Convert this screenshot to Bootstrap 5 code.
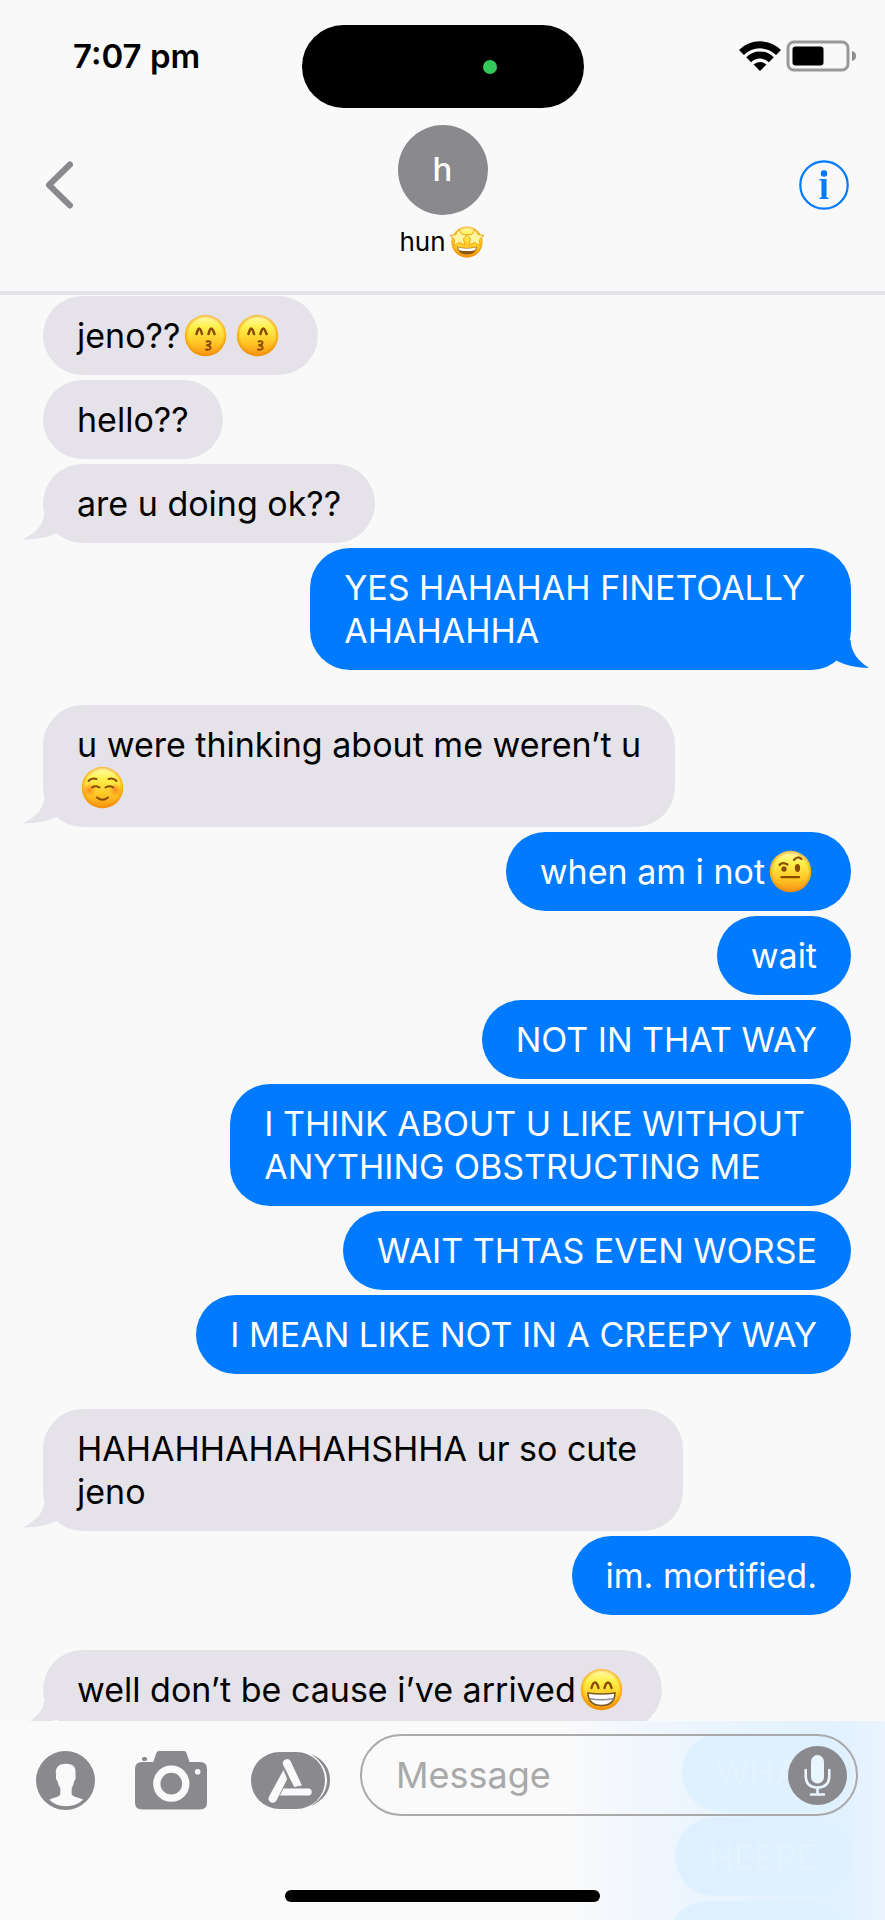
<!DOCTYPE html>
<html lang="en">
<head>
<meta charset="utf-8">
<meta name="viewport" content="width=device-width, initial-scale=1">
<title>hun – Messages</title>
<link href="https://cdn.jsdelivr.net/npm/bootstrap@5.3.0/dist/css/bootstrap.min.css" rel="stylesheet">
<style>
  :root { --grey: #8a898e; --in: #e5e3e9; --out: #007aff; --page: #f9f9f9; }
  body { background: var(--page); color: #000; font-family: Inter, "Liberation Sans", sans-serif; }
  svg { display: block; }
  .phone { height: 100vh; }
  .thirds { display: grid; grid-template-columns: 1fr auto 1fr; }

  /* top of the screen */
  .status { padding: 25px 28px 0 73px; }
  .status-side { height: 62px; }
  .clock { font-size: 33px; font-weight: 600; line-height: 40px; }
  .island { width: 282px; height: 83px; background: #000; padding-right: 87px; margin-left: -45px; }
  .cam-dot { width: 14px; height: 14px; background: #34c759; }
  .topbar { padding: 17px 36px 33px 45px; border-bottom: 4px solid #e5e4e9; }
  .topbar-side { height: 120px; }
  .contact { margin-left: -9px; }
  .avatar { width: 90px; height: 90px; background: var(--grey); color: #fff; font-size: 33px; font-weight: 500; }
  .contact-name { margin-top: 11px; font-size: 26px; line-height: 32px; font-weight: 400; }

  /* conversation */
  .thread { flex: 1 1 0; min-height: 0; padding: 1px 34px 0 43px; }
  .run { gap: 5px; }
  .run + .run { margin-top: 5px; }
  .run.spaced { margin-top: 35px; }
  .bubble { position: relative; padding: 18px 34px; border-radius: 40px; font-size: 34px; line-height: 43px; white-space: nowrap; }
  .bubble-wrapped { padding-right: 46px; }
  .bubble-in { background: var(--in); }
  .bubble-out { background: var(--out); color: #fff; }
  .emoji { display: inline-block; width: 52px; height: 43px; vertical-align: top; }
  .tail { position: absolute; bottom: 0; width: 40px; height: 36px; }
  .bubble-in .tail { left: -20px; fill: var(--in); }
  .bubble-out .tail { right: -18px; fill: var(--out); }

  /* composer */
  .composer { position: relative; padding: 13px 0 18px;
    background: linear-gradient(90deg, #fafafb 64%, #f0f6fe 73%, #e6f3ff 86%, #e2f1ff 95%, #eaf4ff 100%); }
  .under { position: absolute; inset: 0; overflow: hidden; padding: 12px 34px 0 0; }
  .under .bubble { background: #dff0ff; color: #e5f3ff; }
  .tools { position: relative; padding: 0 27px 0 36px; }
  .tool-icons { padding-top: 17px; padding-right: 29px; gap: 40px; }
  .field { height: 82px; min-width: 0; border: 2px solid #aaa; padding: 0 9px 0 34px; }
  .field input { width: 0; font-size: 36px; line-height: 44px; color: #000; outline: 0; }
  .field input::placeholder { color: #a9a9a9; opacity: 1; }
  .home-bar { position: relative; width: 36%; max-width: 315px; height: 12px; background: #000; margin-top: 74px; }
</style>
</head>
<body>
<svg width="0" height="0" class="position-absolute" aria-hidden="true">
  <defs>
    <linearGradient id="face" x1="0" y1="0" x2="0" y2="1">
      <stop offset="0" stop-color="#fffbb4"/><stop offset=".3" stop-color="#fff04a"/>
      <stop offset=".65" stop-color="#ffc928"/><stop offset="1" stop-color="#f79310"/>
    </linearGradient>
    <radialGradient id="rim"><stop offset=".82" stop-color="#f08a00" stop-opacity="0"/><stop offset="1" stop-color="#f08a00" stop-opacity=".65"/></radialGradient>
    <radialGradient id="blush"><stop offset="0" stop-color="#ff6a1a" stop-opacity=".75"/><stop offset="1" stop-color="#ff8a1a" stop-opacity="0"/></radialGradient>
    <g id="head"><circle cx="25.500" cy="21.500" r="20.700" fill="url(#face)"/><circle cx="25.500" cy="21.500" r="20.700" fill="url(#rim)"/></g>
    <symbol id="kiss" viewBox="0 0 52 43">
      <use href="#head"/>
      <g fill="none" stroke="#8a4b00" stroke-width="2.6" stroke-linecap="round" stroke-linejoin="round">
        <path d="M16.500 20Q18 14.500 19.200 14.500Q20.500 14.500 22 20M28.500 20Q30 14.500 31.300 14.500Q32.500 14.500 34.500 20"/>
        <path d="M26.500 27.500Q31 26.500 30.500 29Q30 31 27 31.300Q31.500 32 30.500 34.500Q29 36.500 26 35.500" stroke-width="1.900"/>
      </g>
    </symbol>
    <symbol id="smile" viewBox="0 0 52 43">
      <use href="#head"/>
      <circle cx="12.500" cy="24" r="7" fill="url(#blush)"/><circle cx="38.500" cy="24" r="7" fill="url(#blush)"/>
      <g fill="none" stroke="#8a4b00" stroke-width="2" stroke-linecap="round">
        <path d="M11.500 15Q14.500 11.500 19.500 13M31.500 13Q36.500 11.500 39.500 15M15 21.500Q18.500 19 22.500 21.500M28.500 21.500Q32.500 19 36.500 21.500M20 31.500Q25.500 36 31 31.500"/>
      </g>
    </symbol>
    <symbol id="brow" viewBox="0 0 52 43">
      <use href="#head"/>
      <g fill="none" stroke="#8a4b00" stroke-width="2.200" stroke-linecap="round">
        <path d="M14.500 15Q17.500 11.500 22.500 14.500M29 10Q32.500 5.500 36.500 9M16.500 27.200H34"/>
      </g>
      <ellipse cx="19" cy="19" rx="2.600" ry="2.800" fill="#8a4b00"/><ellipse cx="32.500" cy="18" rx="2.600" ry="4" fill="#8a4b00"/>
    </symbol>
    <symbol id="grin" viewBox="0 0 52 43">
      <use href="#head"/>
      <path d="M15.500 20Q17 14.500 19 14.500Q21 14.500 22.500 20M28.500 20Q30 14.500 32 14.500Q34 14.500 35.500 20" fill="none" stroke="#8a4b00" stroke-width="2.400" stroke-linecap="round"/>
      <path d="M12 25Q25.500 27 39 25Q38.500 37.500 25.500 37.500Q12.500 37.500 12 25Z" fill="#fff" stroke="#7a5a20" stroke-width="1.600"/>
      <path d="M13 30.500Q25.500 33 38 30.500" fill="none" stroke="#8b8b8b" stroke-width="1.300"/>
    </symbol>
  </defs>
</svg>

<div class="phone d-flex flex-column overflow-hidden">
  <header>
    <div class="status thirds">
      <div class="status-side d-flex align-items-center"><time class="clock">7:07 pm</time></div>
      <div class="island rounded-pill d-flex align-items-center justify-content-end"><span class="cam-dot rounded-circle"></span></div>
      <div class="status-side d-flex align-items-center justify-content-end">
        <svg width="42" height="30" viewBox="0 0 42 30" role="img" aria-label="Wi-Fi">
          <path d="M2.500 11.500A26.200 26.200 0 0 1 39.500 11.500M9.700 18.700A16 16 0 0 1 32.300 18.700" fill="none" stroke="#000" stroke-width="7"/>
          <path d="M14.600 23.600A9 9 0 0 1 27.400 23.600L21 30Z"/>
        </svg>
        <svg class="ms-1" width="72" height="32" viewBox="0 0 72 32" role="img" aria-label="Battery">
          <rect x="3" y="2" width="60" height="28" rx="6" fill="none" stroke="#999" stroke-width="3"/>
          <rect x="7.500" y="6.500" width="31" height="19" rx="3"/>
          <path d="M67 11Q71 12 71 16Q71 20 67 21Z" fill="#8f8f8f"/>
        </svg>
      </div>
    </div>
    <nav class="topbar thirds">
      <div class="topbar-side d-flex align-items-center">
        <button class="btn p-0 border-0" aria-label="Back">
          <svg width="28" height="48" viewBox="0 0 28 48"><path d="M25 3.500L4 24L25 44.500" fill="none" stroke="#8a898e" stroke-width="6" stroke-linecap="round" stroke-linejoin="round"/></svg>
        </button>
      </div>
      <div class="contact d-flex flex-column align-items-center">
        <div class="avatar rounded-circle d-flex align-items-center justify-content-center">h</div>
        <h1 class="contact-name mb-0 d-flex align-items-center">hun
          <svg width="40" height="32" viewBox="-3 0 40 32" role="img" aria-label="star-struck">
            <circle cx="18" cy="16" r="15.500" fill="url(#face)"/><circle cx="18" cy="16" r="15.500" fill="url(#rim)"/>
            <path d="M10 3L12.500 8L18 9L14.500 13L16 19L10.500 16.500L5 19.500L5.500 13.500L1 9.500L7 8.500Z M26 3L29 8.500L35 9.500L30.500 13.500L31 19.500L25.500 16.500L20 19L21.500 13L18 9L23.500 8Z" fill="#fff5a0" stroke="#f0a415" stroke-width="1"/>
            <path d="M8 20.500Q18 23.500 28 20.500Q27 28.500 18 28.500Q9 28.500 8 20.500Z" fill="#8a5a10"/>
            <path d="M9 21.200Q18 24 27 21.200L26 24.200Q18 26 10 24.200Z" fill="#fff"/>
          </svg>
        </h1>
      </div>
      <div class="topbar-side d-flex align-items-center justify-content-end">
        <button class="btn p-0 border-0" aria-label="Details">
          <svg width="50" height="50" viewBox="0 0 50 50" fill="#007aff"><circle cx="25" cy="25" r="23.700" fill="none" stroke="#007aff" stroke-width="2.200"/><circle cx="25" cy="13.500" r="3.200"/><path d="M20.500 19H27.500V37.500H29.500V39H20.500V37.500H22.500V20.500H20.500Z"/></svg>
        </button>
      </div>
    </nav>
  </header>

  <main class="thread overflow-hidden">
    <div class="run d-flex flex-column align-items-start">
      <div class="bubble bubble-in">jeno??<svg class="emoji" role="img" aria-label="kissing face"><use href="#kiss"/></svg><svg class="emoji" role="img" aria-label="kissing face"><use href="#kiss"/></svg></div>
      <div class="bubble bubble-in">hello??</div>
      <div class="bubble bubble-in">are u doing ok??<svg class="tail" viewBox="0 0 40 36"><path d="M21 8C20 20 10 27 0 32.500Q18 33 34 26L40 8Z"/></svg></div>
    </div>
    <div class="run d-flex flex-column align-items-end">
      <div class="bubble bubble-out bubble-wrapped">YES HAHAHAH FINETOALLY<br>AHAHAHHA<svg class="tail" viewBox="0 0 40 36"><path d="M21.500 6C22 18 29 27 40 34Q22 34 8 27L10 6Z"/></svg></div>
    </div>
    <div class="run spaced d-flex flex-column align-items-start">
      <div class="bubble bubble-in">u were thinking about me weren’t u<br><svg class="emoji" role="img" aria-label="smiling face"><use href="#smile"/></svg><svg class="tail" viewBox="0 0 40 36"><path d="M21 8C20 20 10 27 0 32.500Q18 33 34 26L40 8Z"/></svg></div>
    </div>
    <div class="run d-flex flex-column align-items-end">
      <div class="bubble bubble-out">when am i not<svg class="emoji" role="img" aria-label="face with raised eyebrow"><use href="#brow"/></svg></div>
      <div class="bubble bubble-out">wait</div>
      <div class="bubble bubble-out">NOT IN THAT WAY</div>
      <div class="bubble bubble-out bubble-wrapped">I THINK ABOUT U LIKE WITHOUT<br>ANYTHING OBSTRUCTING ME</div>
      <div class="bubble bubble-out">WAIT THTAS EVEN WORSE</div>
      <div class="bubble bubble-out">I MEAN LIKE NOT IN A CREEPY WAY</div>
    </div>
    <div class="run spaced d-flex flex-column align-items-start">
      <div class="bubble bubble-in bubble-wrapped">HAHAHHAHAHAHSHHA ur so cute<br>jeno<svg class="tail" viewBox="0 0 40 36"><path d="M21 8C20 20 10 27 0 32.500Q18 33 34 26L40 8Z"/></svg></div>
    </div>
    <div class="run d-flex flex-column align-items-end">
      <div class="bubble bubble-out">im. mortified.</div>
    </div>
    <div class="run spaced d-flex flex-column align-items-start">
      <div class="bubble bubble-in">well don’t be cause i’ve arrived<svg class="emoji" role="img" aria-label="beaming face"><use href="#grin"/></svg><svg class="tail" viewBox="0 0 40 36"><path d="M21 8C20 20 10 27 0 32.500Q18 33 34 26L40 8Z"/></svg></div>
    </div>
  </main>

  <footer class="composer">
    <!-- next messages showing faintly through the bar -->
    <div class="under" aria-hidden="true">
      <div class="run d-flex flex-column align-items-end">
        <div class="bubble">WHAT</div>
        <div class="bubble">HEERE</div>
        <div class="bubble">&nbsp;&nbsp;&nbsp;&nbsp;&nbsp;&nbsp;&nbsp;&nbsp;&nbsp;&nbsp;&nbsp;&nbsp;</div>
      </div>
    </div>
    <form class="tools d-flex align-items-start">
      <div class="tool-icons d-flex flex-shrink-0">
        <button type="button" class="btn p-0 border-0" aria-label="Contact">
          <svg width="59" height="59" viewBox="0 0 59 59"><circle cx="29.500" cy="29.500" r="29.500" fill="#8a898e"/>
          <path d="M30 12.700C37 12.700 40 16 39.500 22Q39.300 25 39.800 26.500Q39.500 29 38.300 30Q37.500 34 35.700 37V43.500C37 46 43 46.500 47.300 48.800Q40 55.300 30 55.300Q20 55.300 13.300 48.800C18 46.500 23 46 24.300 43.500V37Q22 34 21.500 30Q20 29 19.800 26.500Q20.300 25 19.800 22C19.500 16 23 12.700 30 12.700Z" fill="#fafafb"/></svg>
        </button>
        <button type="button" class="btn p-0 border-0" aria-label="Camera">
          <svg width="72" height="59" viewBox="0 0 72 59" fill="#8a898e"><path d="M7 11H18.300L21.300 2Q22 0 24 0H49Q51 0 51.500 2L54.500 11H65Q72 11 72 18V51.500Q72 58.500 65 58.500H7Q0 58.500 0 51.500V18Q0 11 7 11Z"/><rect x="7" y="6" width="5" height="4" rx="1.800"/>
          <circle cx="36.300" cy="32.700" r="14.500" fill="none" stroke="#fafafb" stroke-width="7.300"/><circle cx="62.700" cy="20.700" r="2.800" fill="#fafafb"/></svg>
        </button>
        <button type="button" class="btn p-0 border-0 ms-1" aria-label="Apps">
          <svg width="80" height="59" viewBox="0 0 80 59" fill="#8a898e"><path d="M60 3Q79 11 79 29.500Q79 46 60 55Q76 44 76 29.500Q76 14 60 3Z"/><rect x="0" y="1" width="74" height="57" rx="28.500"/>
          <g fill="#fafafb"><path d="M39.500 10L51 34.500Q46 35 43.200 36L32 13.500A4.200 4.200 0 0 1 39.500 10Z"/><path d="M32.500 19L36.200 28L25.500 49.500A4.200 4.200 0 0 1 18 45.500Z"/><path d="M32.500 37.500H58A3.600 3.600 0 0 1 58 44.500H29Z"/></g></svg>
        </button>
      </div>
      <div class="field rounded-pill d-flex align-items-center flex-grow-1">
        <input type="text" class="border-0 bg-transparent flex-grow-1 p-0" placeholder="Message" aria-label="Message">
        <button type="button" class="btn p-0 border-0 flex-shrink-0" aria-label="Dictate">
          <svg width="59" height="59" viewBox="0 0 59 59"><circle cx="29.500" cy="29.500" r="29.500" fill="#8a898e"/><rect x="23" y="9" width="13" height="28.500" rx="6.500" fill="#e9f5ff"/>
          <path d="M17.700 24V29.500Q17.700 41.500 29.500 41.500Q41.300 41.500 41.300 29.500V24M29.500 41.500V48.500M23 48.500H36" fill="none" stroke="#e9f5ff" stroke-width="2.600" stroke-linecap="round"/></svg>
        </button>
      </div>
    </form>
    <div class="home-bar rounded-pill mx-auto"></div>
  </footer>
</div>
<script src="https://cdn.jsdelivr.net/npm/bootstrap@5.3.0/dist/js/bootstrap.bundle.min.js"></script>
</body>
</html>
